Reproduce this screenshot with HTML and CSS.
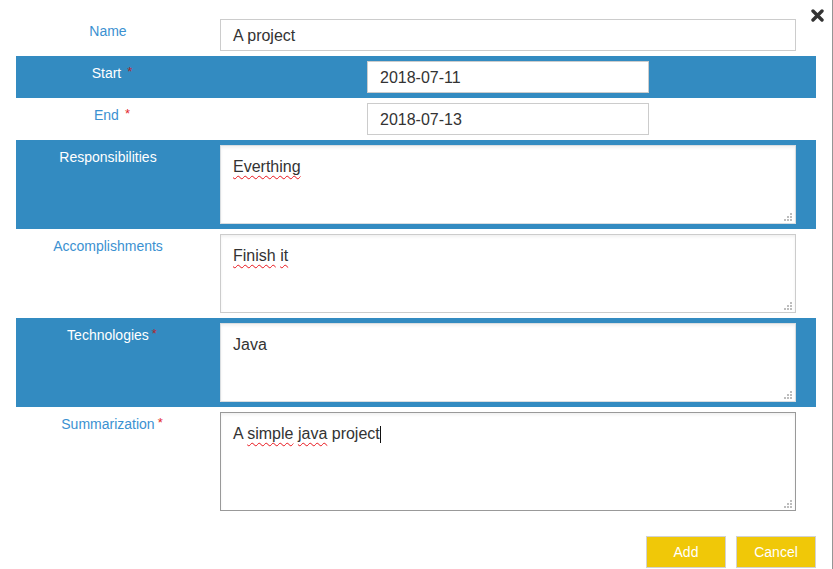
FILE: index.html
```html
<!DOCTYPE html>
<html lang="en">
<head>
<meta charset="utf-8">
<title>Project</title>
<link rel="stylesheet" href="styles.css">
</head>
<body>
<div class="modal">
  <button class="close" aria-label="Close">
    <svg width="13" height="13" viewBox="0 0 13 13"><path d="M2 2 L11 11 M11 2 L2 11" stroke="#333" stroke-width="3.4" stroke-linecap="round"/></svg>
  </button>
  <form class="form">
    <div class="row">
      <div class="label">Name</div>
      <div class="field"><div class="input">A project</div></div>
    </div>
    <div class="row band">
      <div class="label req">Start<span class="star sp">*</span></div>
      <div class="field center"><div class="input date">2018-07-11</div></div>
    </div>
    <div class="row">
      <div class="label req">End<span class="star sp">*</span></div>
      <div class="field center"><div class="input date">2018-07-13</div></div>
    </div>
    <div class="row band">
      <div class="label">Responsibilities</div>
      <div class="field"><div class="area light"><span class="typo">Everthing</span></div></div>
    </div>
    <div class="row">
      <div class="label">Accomplishments</div>
      <div class="field"><div class="area"><span class="typo">Finish</span> <span class="typo">it</span></div></div>
    </div>
    <div class="row band">
      <div class="label req">Technologies<span class="star">*</span></div>
      <div class="field"><div class="area light">Java</div></div>
    </div>
    <div class="row">
      <div class="label req">Summarization<span class="star">*</span></div>
      <div class="field"><div class="area tall focus">A <span class="typo">simple</span> <span class="typo">java</span> project<span class="caret"></span></div></div>
    </div>
    <div class="actions">
      <button type="button" class="btn">Add</button>
      <button type="button" class="btn">Cancel</button>
    </div>
  </form>
</div>
</body>
</html>
```
FILE: styles.css
```css
html, body {
  margin: 0;
  padding: 0;
  background: #fff;
}
body {
  font-family: "Liberation Sans", Arial, sans-serif;
}
.modal {
  position: relative;
  width: 832px;
  height: 569px;
  border-right: 1px solid #959595;
  box-sizing: content-box;
}
.close {
  position: absolute;
  top: 9px;
  right: 8px;
  width: 13px;
  height: 13px;
  padding: 0;
  border: 0;
  background: none;
  display: block;
}
.close svg { display: block; }
.form {
  margin: 0;
  padding: 14px 16px 0 16px;
  width: 800px;
}
.row {
  display: flex;
  padding: 5px 0;
}
.row.band {
  background: #338bc1;
}
.label {
  width: 184px;
  flex: none;
  text-align: center;
  padding-top: 2px;
  height: 22px;
  line-height: 20px;
  font-size: 14px;
  color: #3b91d1;
  box-sizing: border-box;
}
.label.req {
  padding-left: 8px;
}
.band .label {
  color: #fff;
}
.star {
  font-size: 13px;
  line-height: 0;
  position: relative;
  top: -2px;
  color: #e3262b;
  margin-left: 3px;
}
.star.sp {
  margin-left: 6px;
}
.band .star {
  color: #b3262c;
}
.field {
  margin-left: 20px;
  width: 576px;
  flex: none;
}
.field.center {
  display: flex;
  justify-content: center;
}
.input {
  height: 32px;
  box-sizing: border-box;
  border: 1px solid #cccccc;
  background: #fff;
  padding: 0 12px;
  font-size: 16px;
  line-height: 31px;
  color: #333;
}
.input.date {
  width: 282px;
}
.area {
  height: 79px;
  box-sizing: border-box;
  border: 1px solid #cccccc;
  padding: 10px 12px 0;
  font-size: 16px;
  line-height: 22px;
  color: #333;
  box-shadow: inset 0 2px 3px rgba(0, 0, 0, 0.06);
  background-color: #fff;
  background-image:
    linear-gradient(#bdbdbd, #bdbdbd),
    linear-gradient(#bdbdbd, #bdbdbd),
    linear-gradient(#bdbdbd, #bdbdbd),
    linear-gradient(#bdbdbd, #bdbdbd),
    linear-gradient(#bdbdbd, #bdbdbd),
    linear-gradient(#bdbdbd, #bdbdbd);
  background-size: 2px 2px;
  background-repeat: no-repeat;
  background-position:
    right 3px bottom 2px,
    right 6px bottom 2px,
    right 9px bottom 2px,
    right 3px bottom 5px,
    right 6px bottom 5px,
    right 3px bottom 8px;
}
.area.light {
  border-color: #d9dde0;
}
.area.tall {
  height: 99px;
}
.area.focus {
  border-color: #999999;
}
.typo {
  text-decoration: underline wavy #e8141b;
  text-decoration-thickness: 1px;
  text-underline-offset: 3px;
  text-decoration-skip-ink: none;
}
.caret {
  display: inline-block;
  width: 1px;
  height: 17px;
  background: #111;
  vertical-align: -4px;
}
.actions {
  display: flex;
  justify-content: flex-end;
  gap: 10px;
  margin-top: 20px;
}
.btn {
  width: 80px;
  height: 32px;
  box-sizing: border-box;
  border: 1px solid #d2d2d2;
  background: #f0c808;
  color: #fff;
  font-family: "Liberation Sans", Arial, sans-serif;
  font-size: 14px;
  line-height: 30px;
  padding: 0;
  margin: 0;
}
```
